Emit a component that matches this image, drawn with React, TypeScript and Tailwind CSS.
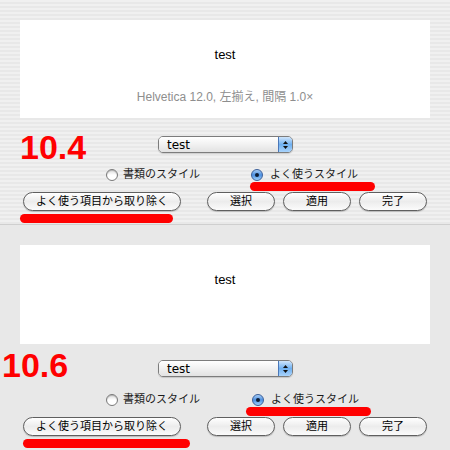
import React from "react"

const jp = "font-['Lucida_Grande','DejaVu_Sans','Noto_Sans_CJK_JP',sans-serif]"

function Popup() {
  return (
    <div className="flex h-[17px] w-[135px] overflow-hidden rounded-[5px] border border-[#7c7c7c] shadow-[0_1px_1px_rgba(0,0,0,0.15)]">
      <div className="flex flex-1 items-center bg-linear-to-b from-white via-[#f1f1f1] to-[#e2e2e2] pl-[8px] text-[12px] leading-none text-black font-['DejaVu_Sans',sans-serif]">
        test
      </div>
      <div className="flex w-[14px] flex-col items-center justify-center gap-[2px] border-l border-[#4a77b8] bg-linear-to-b from-[#cfe5fb] via-[#6fb0f0] to-[#a9d3fb]">
        <svg width="5" height="3" viewBox="0 0 5 3"><path d="M2.5 0L5 3H0z" fill="#111" /></svg>
        <svg width="5" height="3" viewBox="0 0 5 3"><path d="M0 0h5L2.5 3z" fill="#111" /></svg>
      </div>
    </div>
  )
}

function Radio({ on }: { on?: boolean }) {
  if (on) {
    return (
      <div className="flex h-[12px] w-[12px] items-center justify-center rounded-full border border-[#3b5f9a] bg-linear-to-b from-[#a7cdf5] via-[#4b8fe0] to-[#9fd0fa]">
        <div className="h-[4px] w-[4px] rounded-full bg-[#0d1d33]" />
      </div>
    )
  }
  return (
    <div className="h-[12px] w-[12px] rounded-full border border-[#7a7a7a] bg-linear-to-b from-[#dcdcdc] via-white to-white shadow-[inset_0_1px_1px_rgba(0,0,0,0.2)]" />
  )
}

function Button({ label, w }: { label: string; w: string }) {
  return (
    <div
      className={`${w} ${jp} flex h-[19px] items-center justify-center rounded-full border border-[#5f5f5f] bg-linear-to-b from-white via-[#ececec] to-[#fbfbfb] text-[11px] leading-none text-black shadow-[0_1px_1px_rgba(0,0,0,0.2)]`}
    >
      {label}
    </div>
  )
}

function RedLine({ cls }: { cls: string }) {
  return <div className={`h-[9px] shrink-0 rounded-full bg-[#ff0000] ${cls}`} />
}

function Controls({
  version,
  labelCls,
  rowMt,
  popMt,
  radioMt,
  radio1W,
  radioLineCls,
  btnMt,
  btnLineCls,
}: {
  version: string
  labelCls: string
  rowMt: string
  popMt: string
  radioMt: string
  radio1W: string
  radioLineCls: string
  btnMt: string
  btnLineCls: string
}) {
  return (
    <>
      <div className={`flex h-[34px] ${rowMt}`}>
        <div className={`text-[34px] font-bold leading-none text-[#ff0000] font-['Liberation_Sans',Arial,sans-serif] ${labelCls}`}>
          {version}
        </div>
        <div className={popMt}>
          <Popup />
        </div>
      </div>
      <div className={`ml-[86px] flex ${radioMt}`}>
        <div className={`flex h-[13px] items-center gap-[5px] ${radio1W}`}>
          <Radio />
          <span className={`${jp} text-[11px] leading-none text-[#1a1a1a]`}>書類のスタイル</span>
        </div>
        <div className="flex w-[110px] flex-col">
          <div className="flex h-[13px] items-center gap-[7px]">
            <Radio on />
            <span className={`${jp} text-[11px] leading-none text-[#1a1a1a]`}>よく使うスタイル</span>
          </div>
          <RedLine cls={radioLineCls} />
        </div>
      </div>
      <div className={`flex items-start ${btnMt}`}>
        <div className="ml-[3px] flex w-[158px] flex-col">
          <Button label="よく使う項目から取り除く" w="w-[158px]" />
          <RedLine cls={btnLineCls} />
        </div>
        <div className="ml-[26px] flex gap-[8px]">
          <Button label="選択" w="w-[68px]" />
          <Button label="適用" w="w-[68px]" />
          <Button label="完了" w="w-[68px]" />
        </div>
      </div>
    </>
  )
}

export default function App() {
  return (
    <div className="h-[450px] w-[450px] overflow-hidden">
      {/* 10.4 pinstripe half */}
      <div className="h-[225px] border-b border-[#cfcfcf] bg-[repeating-linear-gradient(to_bottom,#f0f0f0_0px,#f0f0f0_2px,#e8e8e8_2px,#e8e8e8_4px)] px-[20px] pt-[20px]">
        <div className="flex h-[98px] flex-col items-center bg-white pt-[28px]">
          <div className="text-[13px] leading-[14px] text-black font-['Liberation_Sans',Arial,sans-serif]">test</div>
          <div className="mt-[28px] text-[12px] leading-[14px] text-[#8e8e8e] font-['Liberation_Sans','Noto_Sans_CJK_JP',sans-serif]">
            Helvetica 12.0, 左揃え, 間隔 1.0×
          </div>
        </div>
        <Controls
          version="10.4"
          labelCls="w-[138px]"
          rowMt="mt-[12px]"
          popMt="mt-[6px]"
          radioMt="mt-[4px]"
          radio1W="w-[145px]"
          radioLineCls="mt-[1px] ml-[-1px] w-[125px]"
          btnMt="mt-[1px]"
          btnLineCls="mt-[3px] ml-[-3px] w-[153px]"
        />
      </div>

      {/* 10.6 flat half */}
      <div className="h-[225px] bg-[#e8e8e8] px-[20px] pt-[20px]">
        <div className="flex h-[99px] flex-col items-center bg-white pt-[28px]">
          <div className="text-[13px] leading-[14px] text-black font-['Liberation_Sans',Arial,sans-serif]">test</div>
        </div>
        <Controls
          version="10.6"
          labelCls="ml-[-18px] w-[156px]"
          rowMt="mt-[4px]"
          popMt="mt-[12px]"
          radioMt="mt-[11px]"
          radio1W="w-[146px]"
          radioLineCls="mt-[1px] ml-[-6px] w-[125px]"
          btnMt="mt-[1px]"
          btnLineCls="mt-[3px] ml-[0px] w-[167px]"
        />
      </div>
    </div>
  )
}
